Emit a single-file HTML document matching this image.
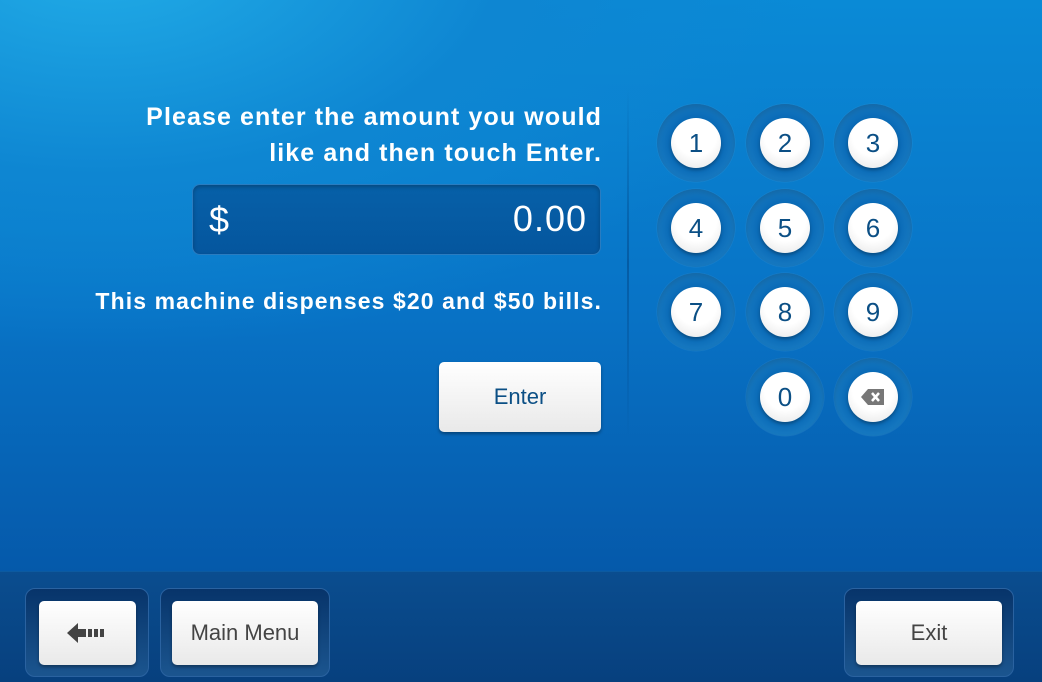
<!DOCTYPE html>
<html><head><style>
*{margin:0;padding:0;box-sizing:border-box}
body{width:1042px;height:682px;overflow:hidden;position:relative;font-family:"Liberation Sans",sans-serif;
background:radial-gradient(ellipse 900px 500px at 100px -50px,#22aee8 0%,#0e86d2 45%,rgba(14,134,210,0) 80%),linear-gradient(180deg,#0a8ad6 0%,#0873c6 45%,#0559aa 84%);}
.t{position:absolute;color:#fff;font-weight:bold;text-align:right}
.box{position:absolute;left:192px;top:184px;width:409px;height:71px;border-radius:8px;background:linear-gradient(#0660a8,#05569e);border:1px solid #2a7cc0;box-shadow:inset 0 2px 4px rgba(0,0,0,.25)}
.btn{position:absolute;border-radius:5px;background:linear-gradient(#ffffff,#e9e9e9);box-shadow:0 2px 3px rgba(0,0,0,.35);display:flex;align-items:center;justify-content:center;font-size:22px}
.key{position:absolute;width:78px;height:78px;border-radius:50%;background:radial-gradient(circle,#0b6cb8 50%,#1d80c6 80%,#288ed0 100%);box-shadow:inset 0 3px 6px rgba(0,0,0,.15),0 0 1px rgba(120,190,240,.5)}
.key b{position:absolute;left:14px;top:14px;width:50px;height:50px;border-radius:50%;background:radial-gradient(circle at 50% 35%,#fff 50%,#e3e3e3);color:#0b4f85;font-size:26px;font-weight:normal;display:flex;align-items:center;justify-content:center;box-shadow:0 2px 3px rgba(0,0,0,.3)}
.foot{position:absolute;left:0;top:571px;width:1042px;height:111px;background:linear-gradient(#0a4d8f,#07407e);border-top:1px solid #0c5aa0}
.well{position:absolute;border-radius:10px;background:linear-gradient(#07346a,#1b558f);border:1px solid #2a62a0}
</style></head><body>
<div class="t" style="left:40px;top:99px;width:562px;font-size:25px;line-height:36px;letter-spacing:1.1px">Please enter the amount you would<br>like and then touch Enter.</div>
<div class="box"><span style="position:absolute;left:16px;top:14px;color:#fff;font-size:36px">$</span><span style="position:absolute;right:13px;top:13px;color:#fff;font-size:36px;letter-spacing:1px">0.00</span></div>
<div class="t" style="left:0px;top:288px;width:602px;font-size:23px;letter-spacing:1.1px">This machine dispenses $20 and $50 bills.</div>
<div class="btn" style="left:439px;top:362px;width:162px;height:70px;color:#0b4f85">Enter</div>
<div style="position:absolute;left:627px;top:88px;width:2px;height:352px;background:linear-gradient(rgba(0,60,120,0),rgba(0,60,120,.45),rgba(0,60,120,0))"></div>
<div class="key" style="left:657px;top:104px"><b>1</b></div>
<div class="key" style="left:746px;top:104px"><b>2</b></div>
<div class="key" style="left:834px;top:104px"><b>3</b></div>
<div class="key" style="left:657px;top:189px"><b>4</b></div>
<div class="key" style="left:746px;top:189px"><b>5</b></div>
<div class="key" style="left:834px;top:189px"><b>6</b></div>
<div class="key" style="left:657px;top:273px"><b>7</b></div>
<div class="key" style="left:746px;top:273px"><b>8</b></div>
<div class="key" style="left:834px;top:273px"><b>9</b></div>
<div class="key" style="left:746px;top:358px"><b>0</b></div>
<div class="key" style="left:834px;top:358px"><b><svg width="26" height="18" viewBox="0 0 26 18"><path d="M8 1H24V17H8L1 9Z" fill="#777"/><path d="M12 5L19 13M19 5L12 13" stroke="#fff" stroke-width="2.5"/></svg></b></div>
<div class="foot"></div>
<div class="well" style="left:25px;top:588px;width:124px;height:89px"></div>
<div class="well" style="left:160px;top:588px;width:170px;height:89px"></div>
<div class="well" style="left:844px;top:588px;width:170px;height:89px"></div>
<div class="btn" style="left:39px;top:601px;width:97px;height:64px"><svg width="42" height="22" viewBox="0 0 42 22"><path d="M0 11L11 1V7H19V15H11V21Z" fill="#444"/><rect x="21" y="7" width="4" height="8" fill="#444"/><rect x="27" y="7" width="4" height="8" fill="#444"/><rect x="33" y="7" width="4" height="8" fill="#444"/></svg></div>
<div class="btn" style="left:172px;top:601px;width:146px;height:64px;color:#444">Main Menu</div>
<div class="btn" style="left:856px;top:601px;width:146px;height:64px;color:#444">Exit</div>
</body></html>
